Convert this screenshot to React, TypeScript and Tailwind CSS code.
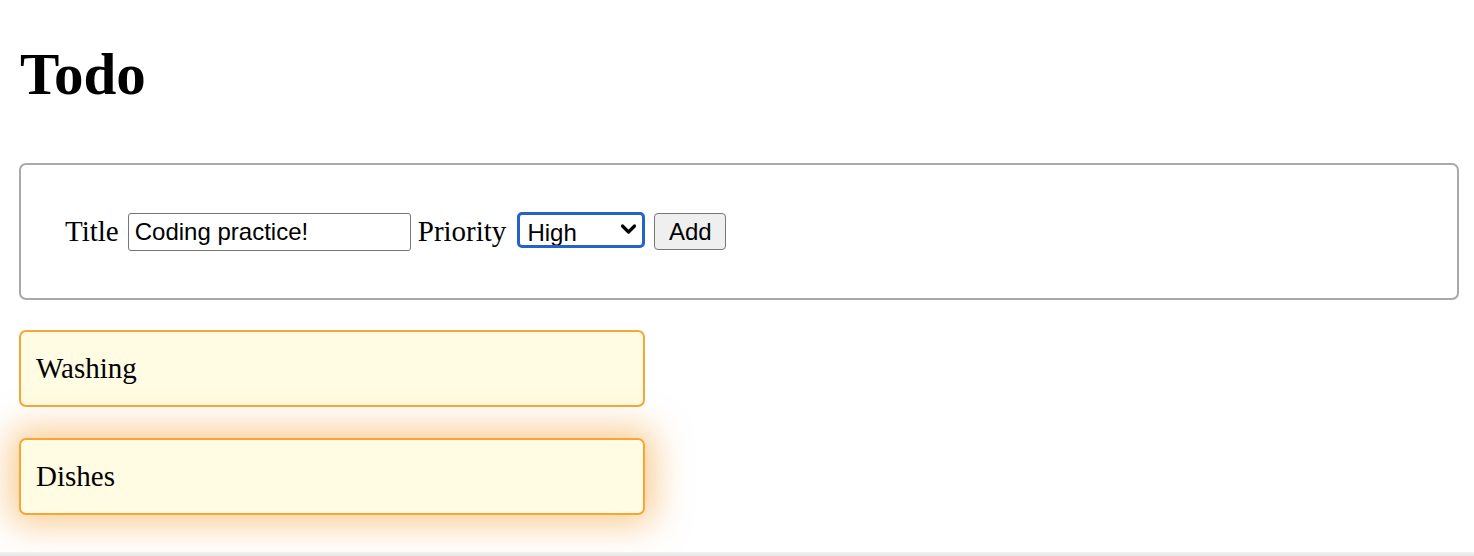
import React, { useState } from "react";

const todos = [
  { id: 1, title: "Washing", glow: false },
  { id: 2, title: "Dishes", glow: true },
];

function TodoCard({ title, glow }: { title: string; glow: boolean }) {
  return (
    <div
      className={
        "w-[626px] h-[77px] flex items-center pl-[15px] rounded-[7px] border-2 border-[#f7a537] bg-[#fffce3] text-[29px] text-black " +
        (glow ? "shadow-[0_0_34px_10px_rgba(245,158,45,0.5)]" : "")
      }
    >
      {title}
    </div>
  );
}

export default function App() {
  const [title, setTitle] = useState("Coding practice!");
  const [priority, setPriority] = useState("High");

  return (
    <div className="relative h-[556px] overflow-hidden bg-white pl-[19px] pr-[15px] font-['Liberation_Serif',serif]">
      <h1 className="pt-[38px] pl-[1px] text-[59px] font-bold leading-[72px] text-black">Todo</h1>

      {/* new todo form */}
      <div className="mt-[53px] h-[137px] flex items-center pl-[44px] rounded-[7px] border-2 border-[#a9a9a9] text-[29px] text-black">
        <label className="mr-[9px]">Title</label>
        <input
          value={title}
          onChange={(e) => setTitle(e.target.value)}
          className="w-[283px] h-[38px] px-[6px] rounded-[3px] border-[1.5px] border-[#767676] bg-white font-['Liberation_Sans',sans-serif] text-[24px] text-black outline-none"
        />
        <label className="ml-[7px] mr-[11px]">Priority</label>
        <div className="relative">
          <select
            value={priority}
            onChange={(e) => setPriority(e.target.value)}
            className="w-[128px] h-[36px] pl-[7px] appearance-none rounded-[5px] border-[3px] border-[#2563c9] bg-white font-['Liberation_Sans',sans-serif] text-[24px] text-black outline-none"
          >
            <option>High</option>
            <option>Medium</option>
            <option>Low</option>
          </select>
          <svg
            className="pointer-events-none absolute right-[8px] top-[13px] h-[12px] w-[17px]"
            viewBox="0 0 17 12"
            fill="none"
          >
            <path d="M2.5 3 L8.5 9 L14.5 3" stroke="black" strokeWidth="3.2" strokeLinecap="round" strokeLinejoin="round" />
          </svg>
        </div>
        <button className="ml-[9px] w-[72px] h-[37px] rounded-[4px] border-[1.5px] border-[#767676] bg-[#efefef] font-['Liberation_Sans',sans-serif] text-[24px] text-black">
          Add
        </button>
      </div>

      <div className="mt-[30px] flex flex-col gap-[31px]">
        {todos.map((t) => (
          <TodoCard key={t.id} title={t.title} glow={t.glow} />
        ))}
      </div>

      <div className="absolute bottom-0 left-0 right-0 h-[4px] bg-gradient-to-b from-[#f2f2f2] to-[#e6e6e6]" />
    </div>
  );
}
